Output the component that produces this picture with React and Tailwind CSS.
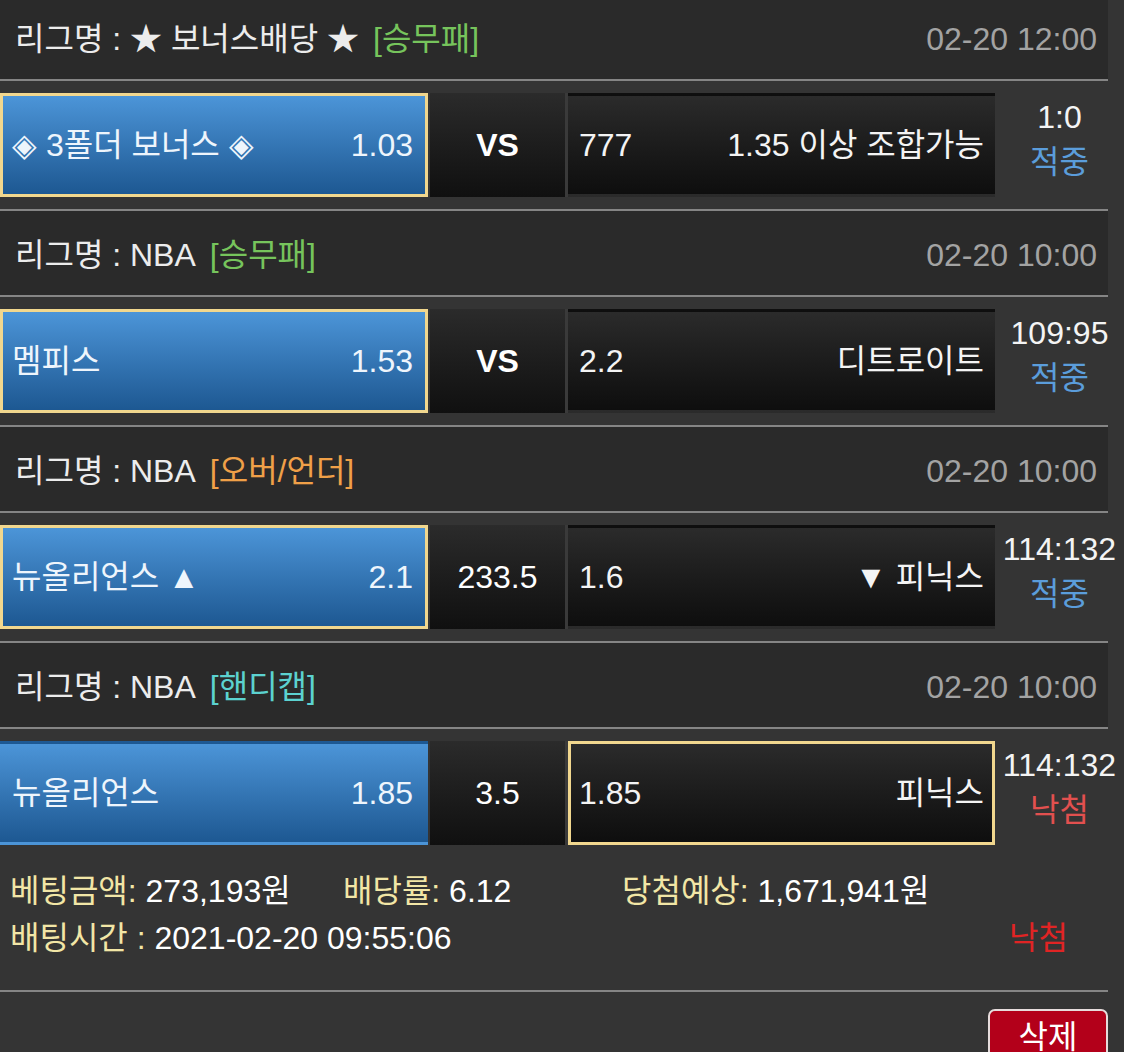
const font = "font-['Liberation_Sans','Noto_Sans_CJK_KR',sans-serif]";

const games = [
  {
    league: '★ 보너스배당 ★',
    tag: '[승무패]',
    tagCls: 'text-[#76c45c]',
    date: '02-20 12:00',
    home: '◈ 3폴더 보너스 ◈',
    homeOdds: '1.03',
    mid: 'VS',
    awayOdds: '777',
    away: '1.35 이상 조합가능',
    score: '1:0',
    result: '적중',
    pick: 'home',
  },
  {
    league: 'NBA',
    tag: '[승무패]',
    tagCls: 'text-[#76c45c]',
    date: '02-20 10:00',
    home: '멤피스',
    homeOdds: '1.53',
    mid: 'VS',
    awayOdds: '2.2',
    away: '디트로이트',
    score: '109:95',
    result: '적중',
    pick: 'home',
  },
  {
    league: 'NBA',
    tag: '[오버/언더]',
    tagCls: 'text-[#f0a048]',
    date: '02-20 10:00',
    home: '뉴올리언스 ▲',
    homeOdds: '2.1',
    mid: '233.5',
    awayOdds: '1.6',
    away: '▼ 피닉스',
    score: '114:132',
    result: '적중',
    pick: 'home',
  },
  {
    league: 'NBA',
    tag: '[핸디캡]',
    tagCls: 'text-[#5cd2d0]',
    date: '02-20 10:00',
    home: '뉴올리언스',
    homeOdds: '1.85',
    mid: '3.5',
    awayOdds: '1.85',
    away: '피닉스',
    score: '114:132',
    result: '낙첨',
    pick: 'away',
  },
];

function GameBlock({ g, last }) {
  const homeSel = g.pick === 'home';
  const awaySel = g.pick === 'away';
  return (
    <div>
      <div className="w-[1108px] h-[84px] bg-[#2a2a2a] flex items-center justify-between pl-[15px] pr-[11px] pt-[4px]">
        <div className="flex items-center text-[#ececec]">
          <span>리그명 : {g.league}</span>
          <span className={`ml-[14px] ${g.tagCls}`}>{g.tag}</span>
        </div>
        <span className="text-[#a3a3a3]">{g.date}</span>
      </div>
      <div className="w-[1108px] h-[2px] bg-[#858585]" />
      <div className="h-[128px] flex items-center">
        <div
          className={`w-[428px] h-[104px] flex items-center justify-between pl-[9px] pr-[12px] border-[3px] bg-gradient-to-b from-[#4c95d8] to-[#1d5892] text-[#eef5fc] ${
            homeSel ? 'border-[#f1d78e]' : 'border-transparent'
          }`}
        >
          <span>{g.home}</span>
          <span>{g.homeOdds}</span>
        </div>
        <div className="ml-[2px] w-[135px] h-[104px] flex items-center justify-center bg-gradient-to-b from-[#2b2b2b] to-[#101010] text-white">
          <span className={g.mid === 'VS' ? 'font-bold' : ''}>{g.mid}</span>
        </div>
        <div className="w-[3px] h-[104px] bg-[#3a3a3a]" />
        <div
          className={`w-[427px] h-[104px] flex items-center justify-between pl-[8px] pr-[8px] border-[3px] bg-gradient-to-b from-[#2b2b2b] to-[#0e0e0e] text-[#f4f4f4] ${
            awaySel ? 'border-[#f1d78e]' : 'border-transparent'
          }`}
        >
          <span>{g.awayOdds}</span>
          <span>{g.away}</span>
        </div>
        <div className="flex-1 h-[104px] flex flex-col items-center justify-start pt-[2px] leading-[45px]">
          <span className="text-[#f4f4f4]">{g.score}</span>
          <span className={g.result === '적중' ? 'text-[#5b9ddb]' : 'text-[#e2504f]'}>{g.result}</span>
        </div>
      </div>
      {!last && <div className="w-[1108px] h-[2px] bg-[#858585]" />}
    </div>
  );
}

export default function App() {
  return (
    <div className={`w-[1124px] h-[1052px] overflow-hidden bg-[#343434] text-[32px] leading-none ${font}`}>
      <div className="-mt-[5px]">
        {games.map((g, i) => (
          <GameBlock key={i} g={g} last={i === games.length - 1} />
        ))}
      </div>
      <div className="h-[133px] pl-[10px] pr-[56px] pt-[20px] flex flex-col gap-[19px]">
        <div className="flex items-center h-[28px]">
          <span className="w-[333px]">
            <span className="text-[#f2e6a6]">베팅금액:</span>
            <span className="text-white"> 273,193원</span>
          </span>
          <span className="w-[279px]">
            <span className="text-[#f2e6a6]">배당률:</span>
            <span className="text-white"> 6.12</span>
          </span>
          <span>
            <span className="text-[#f2e6a6]">당첨예상:</span>
            <span className="text-white"> 1,671,941원</span>
          </span>
        </div>
        <div className="flex items-center justify-between h-[28px]">
          <span>
            <span className="text-[#f2e6a6]">배팅시간 :</span>
            <span className="text-white"> 2021-02-20 09:55:06</span>
          </span>
          <span className="text-[#e02424]">낙첨</span>
        </div>
      </div>
      <div className="w-[1108px] h-[2px] bg-[#858585]" />
      <div className="w-[1108px] flex justify-end pt-[17px]">
        <button className="w-[120px] h-[60px] rounded-[7px] border-2 border-[#e6dcdc] bg-[#b3001a] text-white flex items-start justify-center pt-[10px]">
          삭제
        </button>
      </div>
    </div>
  );
}
